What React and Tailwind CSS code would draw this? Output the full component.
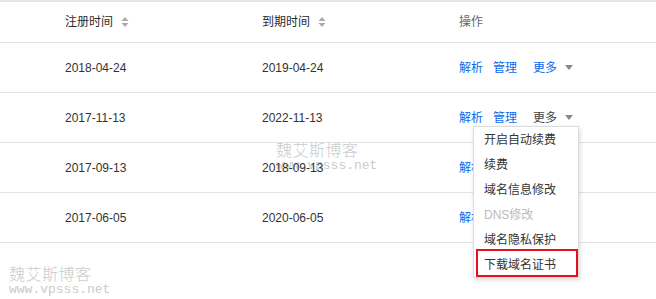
const rows = [
  { reg: '2018-04-24', exp: '2019-04-24' },
  { reg: '2017-11-13', exp: '2022-11-13', open: true },
  { reg: '2017-09-13', exp: '2018-09-13' },
  { reg: '2017-06-05', exp: '2020-06-05' },
]

const menu = ['开启自动续费', '续费', '域名信息修改', 'DNS修改', '域名隐私保护', '下载域名证书']

const font = { fontFamily: '"Liberation Sans", Arial, "Noto Sans CJK SC", sans-serif' }

function SortIcon() {
  return (
    <svg width="8" height="10" viewBox="0 0 8 10" className="ml-2">
      <path d="M4 0 L7.5 4 L0.5 4 Z" fill="#aaa" />
      <path d="M4 10 L7.5 6 L0.5 6 Z" fill="#aaa" />
    </svg>
  )
}

function Caret() {
  return (
    <svg width="8" height="5" viewBox="0 0 8 5" className="ml-2">
      <path d="M0 0 L8 0 L4 5 Z" fill="#888" />
    </svg>
  )
}

function Actions({ open }) {
  return (
    <div className="flex items-center">
      <span className="text-[#0a6ae8]">解析</span>
      <span className="ml-[10px] text-[#0a6ae8]">管理</span>
      <span className={`ml-4 ${open ? 'text-[#444]' : 'text-[#0a6ae8]'}`}>更多</span>
      <Caret />
    </div>
  )
}

function Watermark({ className }) {
  return (
    <div className={`absolute leading-none text-[#cbcbcb] ${className}`}>
      <div className="text-[16px] font-light tracking-[0.5px]" style={{ fontFamily: '"Noto Sans CJK SC", serif' }}>魏艾斯博客</div>
      <div className="mt-[2px] text-[13px]" style={{ fontFamily: '"Liberation Mono", monospace' }}>www.vpsss.net</div>
    </div>
  )
}

export default function App() {
  return (
    <div className="relative w-[656px] h-[299px] bg-white overflow-hidden text-[12px] text-[#333]" style={font}>
      <div className="border-t-2 border-[#e6e6e6]">
        <div className="grid grid-cols-[197px_197px_1fr] pl-[65px] h-[41px] items-center border-b border-[#e3e3e3] text-[#2b2b2b]">
          <div className="flex items-center">注册时间<SortIcon /></div>
          <div className="flex items-center">到期时间<SortIcon /></div>
          <div className="text-[#666]">操作</div>
        </div>
        {rows.map(r => (
          <div key={r.reg} className="grid grid-cols-[197px_197px_1fr] pl-[65px] h-[50px] items-center border-b border-[#e3e3e3]">
            <div>{r.reg}</div>
            <div className="relative z-10">{r.exp}</div>
            <Actions open={r.open} />
          </div>
        ))}
      </div>

      {/* 水印 */}
      <Watermark className="left-[276px] top-[141px]" />
      <Watermark className="left-[9px] top-[265px]" />

      {/* 下拉菜单 */}
      <div className="absolute z-20 left-[473px] top-[126px] w-[106px] bg-white border border-[#dcdcdc] shadow-[1px_2px_5px_rgba(0,0,0,0.15)]">
        {menu.map(m => (
          <div key={m} className={`h-[25px] flex items-center pl-[10px] ${m === 'DNS修改' ? 'text-[#bbb]' : 'text-[#333]'}`}>
            {m}
          </div>
        ))}
      </div>
      <div className="absolute z-30 left-[476px] top-[249px] w-[102px] h-[28px] border-2 border-[#e5101d]" />
    </div>
  )
}
